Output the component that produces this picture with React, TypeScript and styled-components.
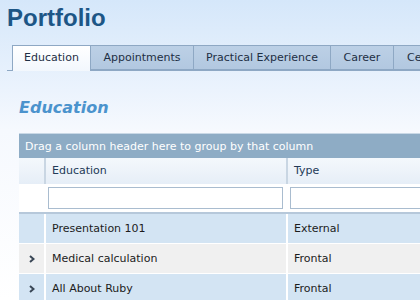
import React from 'react';
import styled, { createGlobalStyle } from 'styled-components';

const GlobalStyle = createGlobalStyle`
    html, body {
        margin: 0;
        padding: 0;
    }
    body {
        font-family: "DejaVu Sans", Verdana, sans-serif;
        background: #ffffff;
    }
`;

const Page = styled.div`
    width: 420px;
    height: 300px;
    overflow: hidden;
    background: linear-gradient(to bottom, #d5e7fa 0px, #ebf3fd 90px, #f6f9fe 130px, #ffffff 300px);
`;

const Title = styled.h1`
    margin: 0;
    padding: 3px 0 0 7px;
    height: 45px;
    box-sizing: border-box;
    font-family: "Liberation Sans", Arial, sans-serif;
    font-weight: bold;
    font-size: 24px;
    line-height: 30px;
    color: #1d5686;
`;

const TabStrip = styled.div`
    display: flex;
    margin-left: 7px;
    padding-left: 5px;
    border-bottom: 1px solid #8ea8c4;
    height: 25px;
    white-space: nowrap;
`;

const Tab = styled.div<{ $active?: boolean; $width: number }>`
    flex: none;
    box-sizing: border-box;
    height: ${p => (p.$active ? '26px' : '25px')};
    width: ${p => p.$width}px;
    font-size: 11px;
    line-height: 24px;
    text-align: center;
    color: #1e2f44;
    border: 1px solid #8ea8c4;
    border-left: ${p => (p.$active ? '1px solid #8ea8c4' : 'none')};
    border-bottom: ${p => (p.$active ? 'none' : '1px solid #8ea8c4')};
    background: ${p => (p.$active
        ? 'linear-gradient(to bottom, #ffffff, #f2f7fd)'
        : 'linear-gradient(to bottom, #bcd0e6, #b2c8e0)')};
`;

const Heading = styled.h2`
    margin: 0;
    padding: 26px 0 0 19px;
    height: 62px;
    box-sizing: border-box;
    font-size: 16px;
    font-style: italic;
    font-weight: bold;
    line-height: 22px;
    color: #4b93cd;
`;

const Grid = styled.div`
    margin-left: 19px;
    width: 420px;
`;

const GroupPanel = styled.div`
    height: 25px;
    padding-left: 6px;
    background: #8eacc5;
    color: #ffffff;
    font-size: 11px;
    line-height: 25px;
    white-space: nowrap;
    border-top: 1px solid #c9d8e6;
    box-sizing: border-box;
`;

type Tone = 'head' | 'filter' | 'blue' | 'grey';

const rowBackground = (tone?: Tone) => {
    if (tone === 'head') return 'linear-gradient(to bottom, #f4f8fc, #e6eef7)';
    if (tone === 'filter') return '#ffffff';
    if (tone === 'grey') return '#f0f0f0';
    return '#d3e4f3';
};

const Row = styled.div<{ $tone?: Tone }>`
    display: grid;
    grid-template-columns: 25px 242px 1fr;
    height: ${p => (p.$tone === 'head' ? '26px' : '30px')};
    background: ${p => rowBackground(p.$tone)};
    border-bottom: ${p => (p.$tone === 'filter'
        ? '2px solid #b6c8da'
        : p.$tone === 'head' ? 'none' : '1px solid #ffffff')};
    box-sizing: border-box;
`;

const Cell = styled.div<{ $head?: boolean }>`
    box-sizing: border-box;
    border-left: 2px solid ${p => (p.$head ? '#c9d6e3' : '#ffffff')};
    padding-left: 6px;
    font-size: 11px;
    line-height: ${p => (p.$head ? '26px' : '29px')};
    color: ${p => (p.$head ? '#233a57' : '#1c1c1c')};
    white-space: nowrap;
    overflow: hidden;

    &:first-child {
        display: flex;
        align-items: center;
        justify-content: center;
        border-left: none;
        padding-left: 0;
    }
`;

const FilterCell = styled.div`
    box-sizing: border-box;
    padding: 3px 3px 0 3px;
    border-left: 1px solid #ffffff;

    &:first-child {
        border-left: none;
        padding: 0;
    }
`;

const FilterInput = styled.div`
    box-sizing: border-box;
    height: 22px;
    background: #ffffff;
    border: 1px solid #a9bccf;
`;

const Chevron = () => (
    <svg width='6' height='8' viewBox='0 0 6 8'>
        <polyline points='1,1 4.5,4 1,7' fill='none' stroke='#3a4756' strokeWidth='2' />
    </svg>
);

const tabs = [
    { label: 'Education', width: 79, active: true },
    { label: 'Appointments', width: 103 },
    { label: 'Practical Experience', width: 137 },
    { label: 'Career', width: 63 },
    { label: 'Certificates', width: 90 },
];

const rows: { title: string; type: string; tone: Tone; expand: boolean }[] = [
    { title: 'Presentation 101', type: 'External', tone: 'blue', expand: false },
    { title: 'Medical calculation', type: 'Frontal', tone: 'grey', expand: true },
    { title: 'All About Ruby', type: 'Frontal', tone: 'blue', expand: true },
];

const App: React.FC = () => {
    return (
        <Page>
            <GlobalStyle />
            <Title>Portfolio</Title>
            <TabStrip>
                {tabs.map(t => (
                    <Tab key={t.label} $active={t.active} $width={t.width}>{t.label}</Tab>
                ))}
            </TabStrip>
            <Heading>Education</Heading>
            <Grid>
                <GroupPanel>Drag a column header here to group by that column</GroupPanel>
                <Row $tone='head'>
                    <Cell $head />
                    <Cell $head>Education</Cell>
                    <Cell $head>Type</Cell>
                </Row>
                <Row $tone='filter'>
                    <FilterCell />
                    <FilterCell><FilterInput /></FilterCell>
                    <FilterCell><FilterInput /></FilterCell>
                </Row>
                {rows.map(r => (
                    <Row key={r.title} $tone={r.tone}>
                        <Cell>{r.expand && <Chevron />}</Cell>
                        <Cell>{r.title}</Cell>
                        <Cell>{r.type}</Cell>
                    </Row>
                ))}
            </Grid>
        </Page>
    );
};

export default App;
